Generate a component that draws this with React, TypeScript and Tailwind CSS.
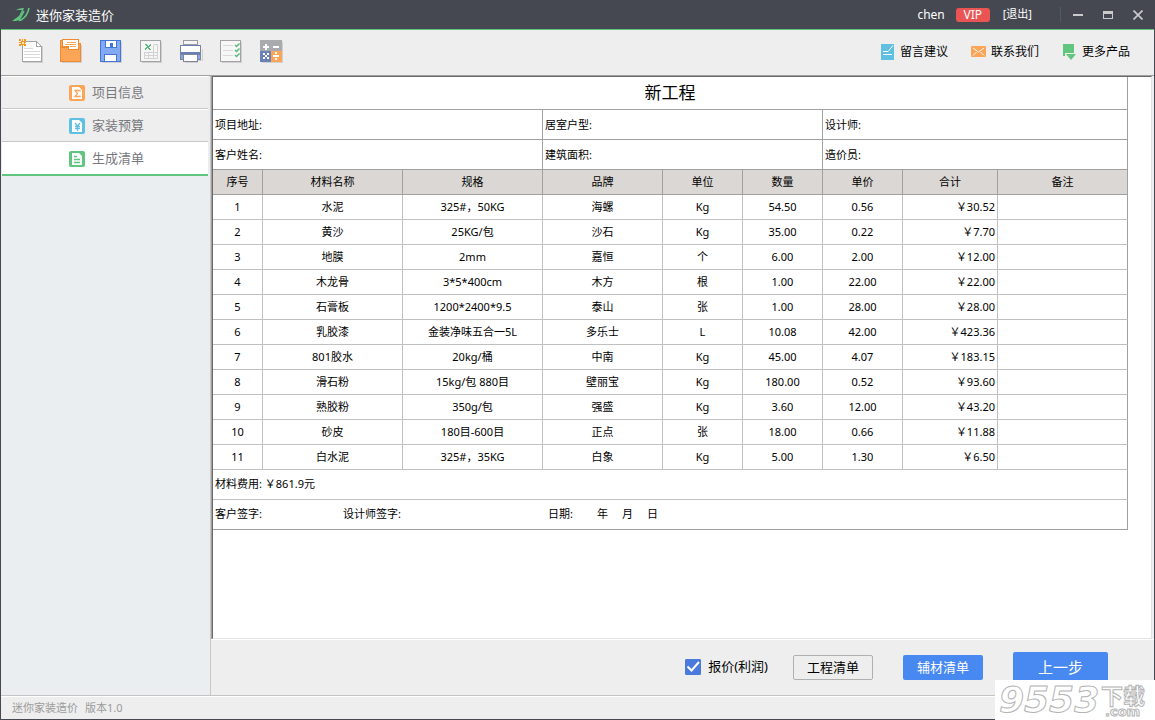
import React, { useState } from 'react'
import clsx from 'clsx'

interface Material {
  name: string
  spec: string
  brand: string
  unit: string
  qty: string
  price: string
  total: string
}

const MATERIALS: Material[] = [
  { name: '水泥', spec: '325#，50KG', brand: '海螺', unit: 'Kg', qty: '54.50', price: '0.56', total: '￥30.52' },
  { name: '黄沙', spec: '25KG/包', brand: '沙石', unit: 'Kg', qty: '35.00', price: '0.22', total: '￥7.70' },
  { name: '地膜', spec: '2mm', brand: '嘉恒', unit: '个', qty: '6.00', price: '2.00', total: '￥12.00' },
  { name: '木龙骨', spec: '3*5*400cm', brand: '木方', unit: '根', qty: '1.00', price: '22.00', total: '￥22.00' },
  { name: '石膏板', spec: '1200*2400*9.5', brand: '泰山', unit: '张', qty: '1.00', price: '28.00', total: '￥28.00' },
  { name: '乳胶漆', spec: '金装净味五合一5L', brand: '多乐士', unit: 'L', qty: '10.08', price: '42.00', total: '￥423.36' },
  { name: '801胶水', spec: '20kg/桶', brand: '中南', unit: 'Kg', qty: '45.00', price: '4.07', total: '￥183.15' },
  { name: '滑石粉', spec: '15kg/包 880目', brand: '壁丽宝', unit: 'Kg', qty: '180.00', price: '0.52', total: '￥93.60' },
  { name: '熟胶粉', spec: '350g/包', brand: '强盛', unit: 'Kg', qty: '3.60', price: '12.00', total: '￥43.20' },
  { name: '砂皮', spec: '180目-600目', brand: '正点', unit: '张', qty: '18.00', price: '0.66', total: '￥11.88' },
  { name: '白水泥', spec: '325#，35KG', brand: '白象', unit: 'Kg', qty: '5.00', price: '1.30', total: '￥6.50' },
]

const HEADERS = ['序号', '材料名称', '规格', '品牌', '单位', '数量', '单价', '合计', '备注']

/* ---------- Toolbar icons (32x28 box) ---------- */

const ToolSvg: React.FC<{ children: React.ReactNode }> = ({ children }) => (
  <svg width="32" height="28" viewBox="0 0 32 28" fill="none" shapeRendering="crispEdges" aria-hidden="true">
    {children}
  </svg>
)

const NewIcon = () => (
  <ToolSvg>
    <path d="M6 25.5h20M25.5 9v17" stroke="#d0d0d0" />
    <path d="M5.5 4.5h14l5 5v15h-19z" fill="#fff" stroke="#a3a3a3" />
    <path d="M19.5 4.5v5h5" stroke="#a3a3a3" />
    <path d="M7 11.5h9M7 14.5h16M7 17.5h16M7 20.5h16" stroke="#d9d9d9" />
    <path d="M2 2h2v2H2zM7 2h2v2H7zM2 7h2v2H2zM7 7h2v2H7zM5 2h1v2H5zM5 7h1v2H5zM2 5h2v1H2zM7 5h2v1H7z" fill="#f39a1f" />
    <path d="M4 4h3v3H4z" fill="#fbe3a8" stroke="#f39a1f" />
  </ToolSvg>
)

const FolderIcon = () => (
  <ToolSvg>
    <path d="M5 25.5h20M24.5 8v18" stroke="#d0d0d0" />
    <path d="M3.5 3.5h3v3h17v18h-20z" fill="#fda557" stroke="#ef8a30" />
    <path d="M5.5 2.5h16v10h-10v-3h-6z" fill="#fff" stroke="#ef8a30" />
    <path d="M4 10.5h7" stroke="#ef8a30" />
    <path d="M10 5.5h9M8 7.5h11M13 9.5h6" stroke="#fda557" />
  </ToolSvg>
)

const SaveIcon = () => (
  <ToolSvg>
    <path d="M5 25.5h20M24.5 5v21" stroke="#d0d0d0" />
    <path d="M3.5 3.5h20v21h-20z" fill="#84a9f3" stroke="#4376db" />
    <path d="M8.5 3.5h11v7h-11z" fill="#fff" stroke="#4376db" />
    <path d="M13 6h3v4h-3z" fill="#4376db" />
    <path d="M7.5 17.5h12v7h-12z" fill="#fff" stroke="#4376db" />
  </ToolSvg>
)

const ExcelIcon = () => (
  <ToolSvg>
    <path d="M5 25.5h20M24.5 5v21" stroke="#d0d0d0" />
    <path d="M3.5 3.5h20v21h-20z" fill="#f5f5f5" stroke="#a3a3a3" />
    <path d="M16.5 7.5h4v14h-13v-6h13M7.5 18.5h13M11.5 15.5v6M16.5 7.5v14" stroke="#d2d2d2" />
    <path d="M8 7h2v1h1v1h1V8h1V7h1v2h-1v1h-1v1h1v1h1v1h-2v-1h-1v-1h-1v1H9v1H8v-2h1v-1h1v-1H9V8H8z" fill="#57bd78" />
  </ToolSvg>
)

const PrintIcon = () => (
  <ToolSvg>
    <path d="M8 25.5h13M25 12v12M20.5 23.5h5" stroke="#d0d0d0" />
    <path d="M3.5 8.5h20v14h-20z" fill="#84a9f3" stroke="#7f8596" />
    <path d="M4 15h19v3H4z" fill="#6b7fb8" />
    <path d="M4 9h19v6H4z" fill="#fff" />
    <path d="M6.5 3.5h14v4h-14z" fill="#f5f5f5" stroke="#9b9b9b" />
    <path d="M4 8.5h19" stroke="#6b7fb8" />
    <path d="M6.5 17.5h14v7h-14z" fill="#fff" stroke="#7f8596" />
  </ToolSvg>
)

const ChecklistIcon = () => (
  <ToolSvg>
    <path d="M5 25.5h20M24.5 5v21" stroke="#d0d0d0" />
    <path d="M3.5 3.5h20v21h-20z" fill="#f7f7f7" stroke="#a3a3a3" />
    <path d="M6 8.5h10M6 13.5h10M6 18.5h10" stroke="#d9d9d9" />
    <path d="M18 8l1.5 1.5L22.5 6.5M18 13l1.5 1.5L22.5 11.5M18 18l1.5 1.5L22.5 16.5" stroke="#57bd78" strokeWidth="1.5" shapeRendering="auto" />
  </ToolSvg>
)

const CalcIcon = () => (
  <ToolSvg>
    <path d="M5 25.5h21M25.5 5v21" stroke="#d0d0d0" />
    <path d="M3 3h22v11H3z" fill="#a8aaad" />
    <path d="M3 14h11v11H3z" fill="#6b7fb8" />
    <path d="M14 14h11v11H14z" fill="#fda557" />
    <path d="M8 7h2v2h2v2h-2v2H8v-2H6V9h2zM16 9h6v2h-6z" fill="#fff" />
    <path d="M6 16h2v2h2v-2h2v2h-2v2h2v2h-2v-2H8v2H6v-2h2v-2H6zM18 15h2v2h-2zM16 18h6v2h-6zM18 21h2v2h-2z" fill="#fff" />
  </ToolSvg>
)

const TOOLS = [
  { title: '新建', Icon: NewIcon },
  { title: '打开', Icon: FolderIcon },
  { title: '保存', Icon: SaveIcon },
  { title: '导出Excel', Icon: ExcelIcon },
  { title: '打印', Icon: PrintIcon },
  { title: '清单', Icon: ChecklistIcon },
  { title: '计算器', Icon: CalcIcon },
]

/* ---------- Link icons (16x16) ---------- */

const NoteIcon = () => (
  <svg width="16" height="16" viewBox="0 0 16 16" fill="none" aria-hidden="true">
    <path d="M1 0h13v16H1z" fill="#5fc0e2" />
    <path d="M13 1.5L8 7.5M3 7.5h5M3 10.5h9" stroke="#fff" />
  </svg>
)

const MailIcon = () => (
  <svg width="16" height="16" viewBox="0 0 16 16" fill="none" aria-hidden="true">
    <rect x="0" y="2" width="15" height="11" rx="1" fill="#fda557" />
    <path d="M2 4l5.5 4L13 4M2 11.5L5.5 8M13 11.5L9.5 8" stroke="#fff" />
  </svg>
)

const MoreIcon = () => (
  <svg width="16" height="16" viewBox="0 0 16 16" fill="none" aria-hidden="true">
    <path d="M1 0h11v9H3v3H1z" fill="#5fc57f" />
    <path d="M4 10h10l-5 6z" fill="#5fc57f" />
  </svg>
)

const LINKS = [
  { label: '留言建议', Icon: NoteIcon },
  { label: '联系我们', Icon: MailIcon },
  { label: '更多产品', Icon: MoreIcon },
]

/* ---------- Sidebar ---------- */

const NAV = [
  { label: '项目信息', color: '#fda557', glyph: 'M11 6.5V5.5H6L8.5 8.5L6 11.5h5v-1' },
  { label: '家装预算', color: '#5fc0e2', glyph: 'M6 5l2.5 3L11 5M8.5 8v5M6 8.5h5M6 10.5h5' },
  { label: '生成清单', color: '#5fc57f', glyph: 'M5 5.5h3M5 8.5h6M5 11.5h6' },
]

const NavIcon: React.FC<{ color: string; glyph: string }> = ({ color, glyph }) => (
  <svg width="16" height="16" viewBox="0 0 16 16" fill="none" aria-hidden="true">
    <rect width="16" height="16" rx="2" fill={color} />
    <path d="M3 2h7l3 3v9H3z" fill="#fff" />
    <path d={glyph} stroke={color} strokeWidth="1.3" />
  </svg>
)

const TitleBar = () => (
  <header className="flex h-[30px] items-center border-b border-[#5fc57f] bg-[#454851] pr-px pl-[11px] text-white">
    <svg width="18" height="14" viewBox="0 0 18 14" fill="none" aria-hidden="true">
      <path d="M0 13L7 8L10 2H5L3 3C5 1 8 0 12 0L7 12C5 13 3 13 0 13z" fill="#5fc57f" />
      <path d="M17 0C16 5 14 9 9 12C7 13 7 12 8 10L12 3" stroke="#5fc57f" strokeWidth="1.6" />
    </svg>
    <h1 className="ml-[6px] pt-px text-[13px] leading-4">迷你家装造价</h1>
    <div className="ml-auto flex items-center">
      <span className="text-[12px]">chen</span>
      <span className="ml-[11px] flex h-[14px] w-[34px] items-center justify-center rounded-[3px] bg-[#ea5553] text-[12px] leading-none">VIP</span>
      <button type="button" className="ml-[13px] text-[11px]">[退出]</button>
      <div className="mr-[2px] ml-7 h-[15px] w-px bg-[#4d5e62]" />
      <button type="button" aria-label="最小化" className="flex h-7 w-[30px] items-center justify-center">
        <svg width="10" height="10" viewBox="0 0 10 10"><path d="M0 4h10v2H0z" fill="#c9cacb" /></svg>
      </button>
      <button type="button" aria-label="最大化" className="flex h-7 w-[30px] items-center justify-center">
        <svg width="10" height="10" viewBox="0 0 10 10"><path d="M0 1h10v8H0zM1 4v4h8V4z" fill="#c9cacb" fillRule="evenodd" /></svg>
      </button>
      <button type="button" aria-label="关闭" className="flex h-7 w-[30px] items-center justify-center">
        <svg width="10" height="10" viewBox="0 0 10 10"><path d="M.5.5l9 9M9.5.5l-9 9" stroke="#c9cacb" strokeWidth="1.7" /></svg>
      </button>
    </div>
  </header>
)

const Toolbar = () => (
  <div className="flex h-[46px] items-center border-b border-[#a0a0a0] bg-[#eeeeee] pl-4">
    <div className="flex gap-2 pb-[3px]">
      {TOOLS.map(({ title, Icon }) => (
        <button key={title} type="button" title={title} aria-label={title}>
          <Icon />
        </button>
      ))}
    </div>
    <nav className="mr-6 ml-auto flex gap-[23px] pb-px">
      {LINKS.map(({ label, Icon }) => (
        <a key={label} href="#" className="flex items-center gap-1 text-[12px] whitespace-nowrap text-black">
          <Icon />
          {label}
        </a>
      ))}
    </nav>
  </div>
)

const HEAD_CELL = 'border-r border-b border-[#a0a0a0] p-0'
const INFO_CELL = 'h-[30px] border-r border-b border-[#a0a0a0] py-0 pr-0 pl-[2px] text-left'
const CELL = 'h-[25px] border-r border-b border-[#c0c0c0] p-0 text-center'

const MaterialSheet = () => (
  <table className="w-[915px] table-fixed border-separate border-spacing-0 text-[11px] leading-4 text-black">
    <colgroup>
      <col className="w-[50px]" />
      <col className="w-[140px]" />
      <col className="w-[140px]" />
      <col className="w-[120px]" />
      <col className="w-[80px]" />
      <col className="w-[80px]" />
      <col className="w-[80px]" />
      <col className="w-[95px]" />
      <col className="w-[130px]" />
    </colgroup>
    <thead>
      <tr>
        <th colSpan={9} className={clsx(HEAD_CELL, 'h-[33px] text-[17px] font-normal')}>新工程</th>
      </tr>
      <tr>
        <td colSpan={3} className={INFO_CELL}>项目地址:</td>
        <td colSpan={3} className={INFO_CELL}>居室户型:</td>
        <td colSpan={3} className={INFO_CELL}>设计师:</td>
      </tr>
      <tr>
        <td colSpan={3} className={INFO_CELL}>客户姓名:</td>
        <td colSpan={3} className={INFO_CELL}>建筑面积:</td>
        <td colSpan={3} className={INFO_CELL}>造价员:</td>
      </tr>
      <tr className="bg-[#dbd7d4]">
        {HEADERS.map((h) => (
          <th key={h} className={clsx(HEAD_CELL, 'h-[25px] font-normal')}>{h}</th>
        ))}
      </tr>
    </thead>
    <tbody>
      {MATERIALS.map((m, i) => (
        <tr key={m.name}>
          <td className={CELL}>{i + 1}</td>
          <td className={CELL}>{m.name}</td>
          <td className={CELL}>{m.spec}</td>
          <td className={CELL}>{m.brand}</td>
          <td className={CELL}>{m.unit}</td>
          <td className={CELL}>{m.qty}</td>
          <td className={CELL}>{m.price}</td>
          <td className="h-[25px] border-r border-b border-[#c0c0c0] py-0 pr-[2px] pl-0 text-right">{m.total}</td>
          <td className="h-[25px] border-r border-b border-r-[#a0a0a0] border-b-[#c0c0c0] p-0" />
        </tr>
      ))}
    </tbody>
    <tfoot>
      <tr>
        <td colSpan={9} className="h-[30px] border-r border-b border-r-[#a0a0a0] border-b-[#c0c0c0] pt-0 pb-[2px] pl-[2px]">
          材料费用: ￥861.9元
        </td>
      </tr>
      <tr>
        <td colSpan={9} className="h-[30px] border-r border-b border-[#a0a0a0] pt-0 pb-[2px] pl-[2px]">
          <div className="flex">
            <span className="w-32">客户签字:</span>
            <span className="w-[205px]">设计师签字:</span>
            <span className="w-[49px]">日期:</span>
            <span className="flex gap-[14px]">
              <span>年</span>
              <span>月</span>
              <span>日</span>
            </span>
          </div>
        </td>
      </tr>
    </tfoot>
  </table>
)

const ActionBar = () => {
  const [withProfit, setWithProfit] = useState(true)

  return (
    <div className="flex h-14 items-center justify-end border-t border-white bg-[#eeeeee] pr-[46px] pb-px text-[13px] text-black">
      <label className="mr-[25px] flex items-center gap-[7px]">
        <span className="relative size-4">
          <input
            type="checkbox"
            checked={withProfit}
            onChange={(e) => setWithProfit(e.target.checked)}
            className="block size-4 appearance-none rounded-[1px] border border-[#4a7bdc] bg-white checked:bg-[#4a7bdc]"
          />
          {withProfit && (
            <svg className="pointer-events-none absolute inset-0" width="16" height="16" viewBox="0 0 16 16" fill="none" aria-hidden="true">
              <path d="M2.5 7.5l4 4L14 3" stroke="#fff" strokeWidth="2" />
            </svg>
          )}
        </span>
        报价(利润)
      </label>
      <div className="flex items-center gap-[30px]">
        <button type="button" className="h-[25px] w-20 rounded-[2px] border border-[#b0b0b0] leading-none">工程清单</button>
        <button type="button" className="h-[25px] w-20 rounded-[2px] bg-[#4788f1] leading-none text-white">辅材清单</button>
        <button type="button" className="h-[30px] w-[95px] rounded-[2px] bg-[#4788f1] text-[15px] leading-none text-white">上一步</button>
      </div>
    </div>
  )
}

const SiteMark = () => (
  <div className="absolute -right-px -bottom-px flex h-10 w-40 items-center bg-white pl-1 leading-none font-bold text-white">
    <span className="w-[102px] font-['DejaVu_Sans',sans-serif] text-[36px] italic [-webkit-text-stroke:1px_#b4b4b4]">9553</span>
    <span className="flex flex-col">
      <span className="font-['Noto_Sans_CJK_SC',sans-serif] text-[22px] leading-[24px] [-webkit-text-stroke:1px_#b4b4b4]">下载</span>
      <span className="pl-1 font-['DejaVu_Sans',sans-serif] text-[13px] leading-[12px] [-webkit-text-stroke:1px_#b4b4b4]">.com</span>
    </span>
  </div>
)

export default function App() {
  const [active, setActive] = useState('生成清单')

  return (
    <div className="relative flex min-h-screen flex-col border-r border-b border-l border-[#454851] bg-[#eeeeee] font-['Noto_Sans','Noto_Sans_CJK_SC',sans-serif]">
      <TitleBar />
      <Toolbar />

      <div className="flex flex-1">
        {/* Sidebar */}
        <aside className="w-[210px] shrink-0 border-r border-[#c8c8c8] bg-[#eaeef0] pl-px">
          {NAV.map(({ label, color, glyph }) => (
            <button
              key={label}
              type="button"
              onClick={() => setActive(label)}
              className={clsx(
                'flex w-[206px] items-center gap-[7px] border-t border-t-white pl-[67px] text-[13px] text-[#77787d]',
                active === label
                  ? 'h-[34px] border-b-2 border-b-[#5fc57f] bg-white'
                  : 'h-[33px] border-b border-b-[#c8c8c8] bg-[#eeeeee]'
              )}
            >
              <NavIcon color={color} glyph={glyph} />
              {label}
            </button>
          ))}
        </aside>

        {/* Sheet + actions */}
        <main className="flex min-w-0 flex-1 flex-col">
          <div className="mr-[2px] flex flex-1 border-l border-[#a0a0a0]">
            <div className="flex-1 border border-t-[#696969] border-r-[#e3e3e3] border-b-[#e3e3e3] border-l-[#696969] bg-white">
              <MaterialSheet />
            </div>
          </div>
          <ActionBar />
        </main>
      </div>

      <footer className="flex h-6 items-center border-t border-[#c4c4c4] pt-px pl-[11px] text-[11px] text-[#9b9b9b] shadow-[inset_0_1px_0_#fff]">
        <span>迷你家装造价</span>
        <span className="ml-[7px]">版本1.0</span>
      </footer>
      <SiteMark />
    </div>
  )
}
